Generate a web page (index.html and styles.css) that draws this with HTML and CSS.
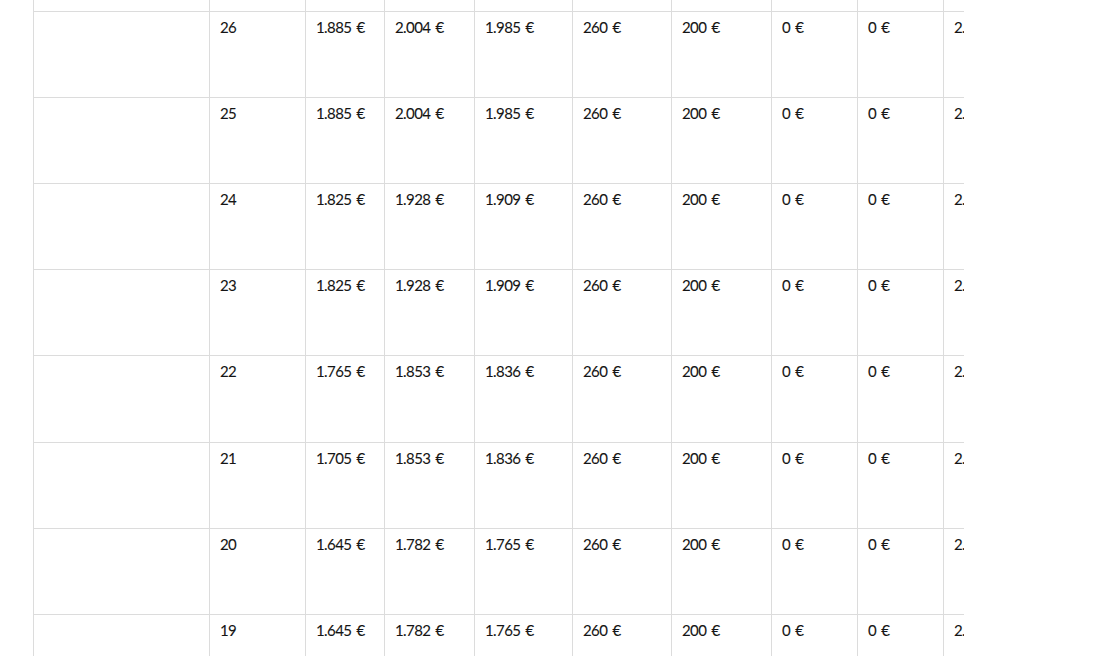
FILE: index.html
```html
<!DOCTYPE html>
<html lang="de">
<head>
<meta charset="utf-8">
<title>Tabelle</title>
<link rel="stylesheet" href="styles.css">
</head>
<body>
<div class="page">
  <div class="scroller">
    <table class="grid">
      <colgroup>
        <col class="c-name"><col class="c-age"><col class="c-a"><col class="c-b"><col class="c-c"><col class="c-d"><col class="c-e"><col class="c-f"><col class="c-g"><col class="c-h">
      </colgroup>
      <tbody>
        <tr class="partial"><td></td><td></td><td></td><td></td><td></td><td></td><td></td><td></td><td></td><td></td></tr>
        <tr><td></td><td>26</td><td>1.885 €</td><td>2.004 €</td><td>1.985 €</td><td>260 €</td><td>200 €</td><td>0 €</td><td>0 €</td><td>2.345 €</td></tr>
        <tr><td></td><td>25</td><td>1.885 €</td><td>2.004 €</td><td>1.985 €</td><td>260 €</td><td>200 €</td><td>0 €</td><td>0 €</td><td>2.345 €</td></tr>
        <tr><td></td><td>24</td><td>1.825 €</td><td>1.928 €</td><td>1.909 €</td><td>260 €</td><td>200 €</td><td>0 €</td><td>0 €</td><td>2.285 €</td></tr>
        <tr><td></td><td>23</td><td>1.825 €</td><td>1.928 €</td><td>1.909 €</td><td>260 €</td><td>200 €</td><td>0 €</td><td>0 €</td><td>2.285 €</td></tr>
        <tr><td></td><td>22</td><td>1.765 €</td><td>1.853 €</td><td>1.836 €</td><td>260 €</td><td>200 €</td><td>0 €</td><td>0 €</td><td>2.225 €</td></tr>
        <tr><td></td><td>21</td><td>1.705 €</td><td>1.853 €</td><td>1.836 €</td><td>260 €</td><td>200 €</td><td>0 €</td><td>0 €</td><td>2.165 €</td></tr>
        <tr><td></td><td>20</td><td>1.645 €</td><td>1.782 €</td><td>1.765 €</td><td>260 €</td><td>200 €</td><td>0 €</td><td>0 €</td><td>2.105 €</td></tr>
        <tr><td></td><td>19</td><td>1.645 €</td><td>1.782 €</td><td>1.765 €</td><td>260 €</td><td>200 €</td><td>0 €</td><td>0 €</td><td>2.105 €</td></tr>
      </tbody>
    </table>
  </div>
</div>
</body>
</html>
```
FILE: styles.css
```css
html, body {
  margin: 0;
  padding: 0;
  background: #ffffff;
}
body {
  font-family: Lato, "Open Sans", Arial, sans-serif;
  color: #151515;
  overflow: hidden;
  height: 656px;
}
.page {
  padding-left: 33px;
  height: 656px;
  overflow: hidden;
}
.scroller {
  width: 931px;
  overflow: hidden;
  margin-top: -75px;
}
.grid {
  border-collapse: collapse;
  table-layout: fixed;
  width: 1110px;
  font-size: 15px;
}
.c-name { width: 176px; }
.c-age { width: 96px; }
.c-a { width: 79px; }
.c-b { width: 90px; }
.c-c { width: 98px; }
.c-d { width: 99px; }
.c-e { width: 100px; }
.c-f { width: 86px; }
.c-g { width: 86px; }
.c-h { width: 300px; }
.grid tr {
  height: 86.1px;
}
.grid td {
  border: 1px solid #dcdcdc;
  vertical-align: top;
  padding: 6px 10px 0 10px;
  line-height: 18px;
  white-space: nowrap;
  letter-spacing: -0.6px;
  word-spacing: 2px;
  -webkit-text-stroke: 0.1px #151515;
}
```
